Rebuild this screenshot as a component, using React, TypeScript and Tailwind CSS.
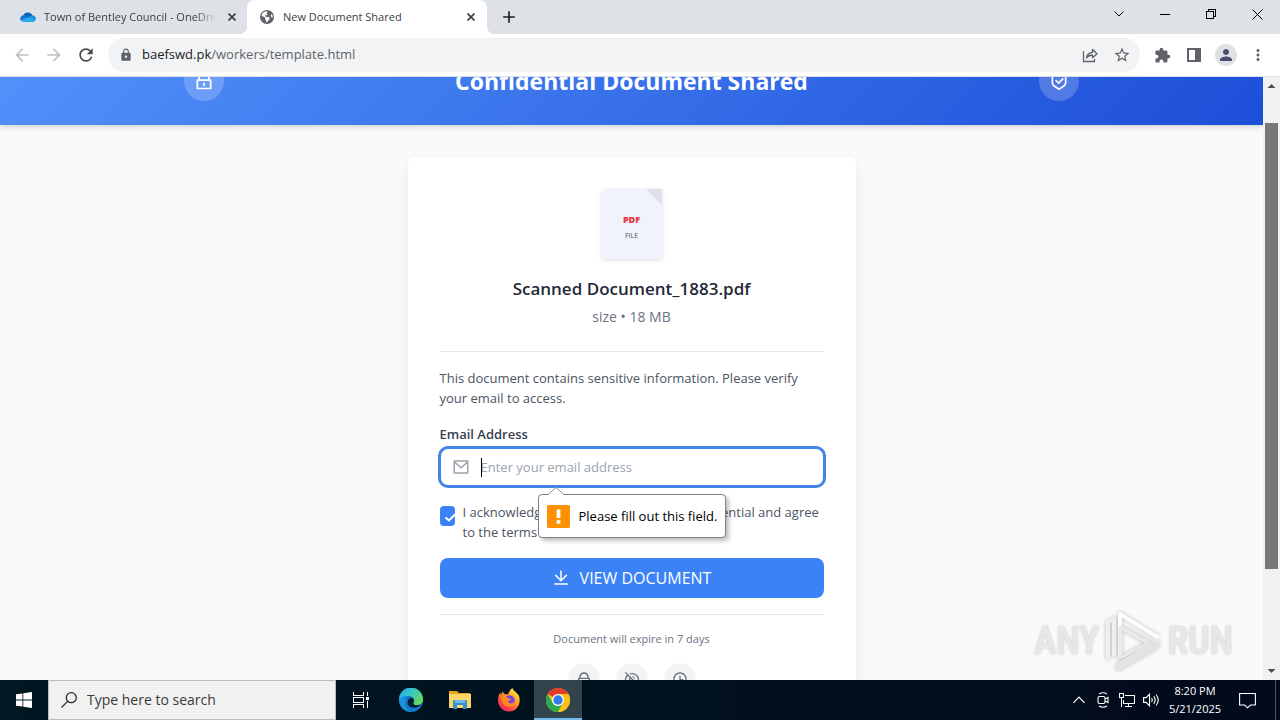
import React from "react";
import {
  RiLockLine,
  RiShieldCheckLine,
  RiMailLine,
  RiDownloadLine,
  RiEyeOffLine,
  RiTimeLine,
} from "react-icons/ri";
import {
  MdArrowBack,
  MdArrowForward,
  MdRefresh,
  MdLock,
  MdStarBorder,
  MdExtension,
  MdPerson,
  MdMoreVert,
  MdAdd,
} from "react-icons/md";
import { FaEarthAmericas } from "react-icons/fa6";

function OneDriveIcon() {
  return (
    <svg viewBox="0 0 16 10" className="h-[10px] w-4 shrink-0" aria-hidden="true">
      <path d="M3.2 3.6A5 5 0 0 1 12.4 3.4L7 6.6Z" fill="#0364b8" />
      <path d="M3.4 3.3A3.4 3.4 0 0 0 .8 8.6L9.5 5.2 6 3.4a4 4 0 0 0-2.6-.1Z" fill="#0f78d4" />
      <path d="M9 5.2 12 3.3a3.4 3.4 0 0 1 3.4 4.9L13 8Z" fill="#1490df" />
      <path d="M.8 8.5A3.3 3.3 0 0 0 3.4 10h9.4a3 3 0 0 0 2.6-1.6L9.3 5Z" fill="#28a8ea" />
    </svg>
  );
}

function TabCloseIcon() {
  return (
    <svg viewBox="0 0 8 8" className="size-2" fill="none" stroke="currentColor" strokeWidth="1.7">
      <path d="M.500 .500l7 7M7.500 .500l-7 7" />
    </svg>
  );
}

function TabStrip() {
  return (
    <div className="flex h-[34px] shrink-0 items-stretch bg-[#dee1e6] text-[#3c4043]">
      <div className="flex w-[247px] items-center pl-5 pr-[11px]">
        <OneDriveIcon />
        <span className="ml-2 w-[172px] overflow-hidden whitespace-nowrap text-[11px] [mask-image:linear-gradient(to_right,black_88%,transparent)]">
          Town of Bentley Council - OneDrive
        </span>
        <button type="button" aria-label="Close tab" className="ml-auto">
          <TabCloseIcon />
        </button>
      </div>
      <div className="relative flex w-60 items-center rounded-t-lg bg-white pl-3 pr-3">
        <span className="absolute bottom-0 -left-2 size-2 bg-[radial-gradient(circle_at_top_left,transparent_8px,white_8px)]" />
        <span className="absolute -right-2 bottom-0 size-2 bg-[radial-gradient(circle_at_top_right,transparent_8px,white_8px)]" />
        <span className="flex size-4 items-center justify-center">
          <FaEarthAmericas className="size-3.5 text-[#5f6368]" />
        </span>
        <span className="ml-2 text-[11px]">New Document Shared</span>
        <button type="button" aria-label="Close tab" className="ml-auto">
          <TabCloseIcon />
        </button>
      </div>
      <button type="button" aria-label="New tab" className="ml-3 text-[#202124]">
        <MdAdd className="size-5" />
      </button>
      <div className="ml-auto flex h-7 text-black">
        <button type="button" aria-label="Search tabs" className="flex w-[46px] items-center justify-center">
          <svg viewBox="0 0 10 6" className="h-1.5 w-2.5" fill="none" stroke="currentColor">
            <path d="M.5 .5 5 5 9.5 .5" />
          </svg>
        </button>
        <button type="button" aria-label="Minimize" className="flex w-[46px] items-center justify-center">
          <span className="h-px w-2.5 bg-black" />
        </button>
        <button type="button" aria-label="Restore" className="flex w-[46px] items-center justify-center">
          <svg viewBox="0 0 10 10" className="size-2.5" fill="none" stroke="currentColor" shapeRendering="crispEdges">
            <path d="M.5 2.5h7v7h-7zM2.5 2.5v-2h7v7h-2" />
          </svg>
        </button>
        <button type="button" aria-label="Close" className="flex w-[46px] items-center justify-center">
          <svg viewBox="0 0 11 11" className="size-[11px]" fill="none" stroke="currentColor">
            <path d="M.5 .5l10 10M10.5 .5l-10 10" />
          </svg>
        </button>
      </div>
    </div>
  );
}

function Toolbar() {
  return (
    <div className="flex h-[43px] shrink-0 items-center border-b border-[#dcdfe3] bg-white text-[#5f6368]">
      <div className="flex gap-3 pl-3">
        <button type="button" aria-label="Back" className="text-[#bdc1c6]">
          <MdArrowBack className="size-5" />
        </button>
        <button type="button" aria-label="Forward" className="text-[#bdc1c6]">
          <MdArrowForward className="size-5" />
        </button>
        <button type="button" aria-label="Reload" className="text-[#46494d]">
          <MdRefresh className="size-5" />
        </button>
      </div>
      <div className="ml-3 flex h-[34px] grow items-center rounded-full bg-[#f1f3f4] pl-[11px] pr-[9px]">
        <MdLock className="size-3.5" />
        <span className="ml-[9px] text-[13px]">
          <span className="text-[#202124]">baefswd.pk</span>/workers/template.html
        </span>
        <button type="button" aria-label="Share" className="ml-auto">
          <svg viewBox="0 0 16 16" className="size-4" fill="none" stroke="currentColor" strokeWidth="1.3">
            <path d="M1.5 4v10.5h11V12" />
            <path d="M4.5 11c.4-3.6 2.600-5.400 6-5.600V2.500L15 6.700l-4.500 4V8c-2.800 0-4.600.8-6 3Z" strokeLinejoin="round" />
          </svg>
        </button>
        <button type="button" aria-label="Bookmark" className="ml-[15px]">
          <MdStarBorder className="size-[18px]" />
        </button>
      </div>
      <div className="flex items-center gap-3 pl-3 pr-3">
        <button type="button" aria-label="Extensions" className="flex w-5 justify-center">
          <MdExtension className="size-[17px]" />
        </button>
        <button type="button" aria-label="Side panel" className="flex w-5 justify-center">
          <svg viewBox="0 0 14 14" className="size-3.5" aria-hidden="true">
            <path d="M0 0h14v14H0zM2 2v10h6V2z" fill="currentColor" fillRule="evenodd" />
          </svg>
        </button>
        <button type="button" aria-label="Profile" className="flex w-5 justify-center">
          <span className="flex size-[22px] shrink-0 items-center justify-center rounded-full bg-[#dee1e6]">
            <MdPerson className="size-[18px] text-[#4a4e6b]" />
          </span>
        </button>
        <button type="button" aria-label="Menu" className="flex w-5 justify-center">
          <MdMoreVert className="size-[18px]" />
        </button>
      </div>
    </div>
  );
}

function PageHeader() {
  return (
    <header className="-mt-10 bg-[linear-gradient(135deg,#5393fb,#1d4ed8)] py-6 text-white shadow-md">
      <div className="mx-auto flex max-w-4xl items-center justify-between">
        <span className="flex size-10 items-center justify-center rounded-full bg-white/20">
          <RiLockLine className="size-5" />
        </span>
        <h1 className="text-[23px] font-bold">Confidential Document Shared</h1>
        <span className="flex size-10 items-center justify-center rounded-full bg-white/20">
          <RiShieldCheckLine className="size-5" />
        </span>
      </div>
    </header>
  );
}

function PdfIcon() {
  return (
    <div className="flex h-[70px] w-[60px] flex-col items-center justify-center rounded-xs bg-[linear-gradient(225deg,#dde1e8_11px,#f0f3fb_12px)] pt-2 shadow-[0_1px_4px_rgba(0,0,0,0.14)]">
      <span className="text-[9px] leading-4 font-extrabold text-[#e5343b]">PDF</span>
      <span className="text-[7px] leading-4 text-[#4b5563]">FILE</span>
    </div>
  );
}

function ValidationBubble() {
  return (
    <div
      role="alert"
      className="absolute top-[46px] left-[98px] z-10 flex h-11 items-center gap-[9px] rounded-sm border border-[#808080] bg-white px-2 text-[13px] whitespace-nowrap text-black shadow-[3px_3px_4px_rgba(0,0,0,0.25)]"
    >
      <svg viewBox="0 0 18 9" className="absolute -top-2 left-2 h-[9px] w-[18px]" aria-hidden="true">
        <path d="M1 8 9 0.500 17 8V9H1Z" fill="#fff" />
        <path d="M1 7.500 9 0.500 17 7.500" fill="none" stroke="#909090" />
      </svg>
      <svg viewBox="0 0 23 23" className="size-[23px]" aria-hidden="true">
        <rect width="23" height="23" rx="1.500" fill="#ff9100" />
        <path d="M9.600 4.500h3.800V13H9.600zM9.600 15.300h3.800V18.800H9.600z" fill="#fff" />
      </svg>
      Please fill out this field.
    </div>
  );
}

function DocumentCard() {
  return (
    <section className="mx-auto w-full max-w-md rounded-lg bg-white p-8 shadow-[0_6px_14px_rgba(0,0,0,0.07)]">
      <div className="flex flex-col items-center">
        <PdfIcon />
        <h2 className="mt-4 text-[17px] leading-7 font-semibold text-[#1f2937]">Scanned Document_1883.pdf</h2>
        <p className="mt-1 text-sm text-[#6b7280]">size • 18 MB</p>
      </div>
      <form
        className="mt-6 border-t border-[#e5e7eb] pt-4 text-[13px] leading-5 text-[#4b5563]"
        onSubmit={(e) => e.preventDefault()}
      >
        <p>This document contains sensitive information. Please verify your email to access.</p>
        <label htmlFor="email" className="mt-4 block font-semibold text-[#374151]">
          Email Address
        </label>
        <div className="relative mt-1">
          <RiMailLine className="absolute top-[10px] left-[12px] size-[18px] text-[#9ca3af]" />
          <input
            id="email"
            type="email"
            placeholder="Enter your email address"
            className="block h-[38px] w-full rounded-lg border border-[#4480e6] bg-white pr-3 pl-10 ring-2 ring-[#4480e6] outline-none placeholder:text-[#9ca3af]"
          />
          <span className="absolute top-[10px] left-[41px] h-[19px] w-px bg-black" />
          <ValidationBubble />
        </div>
        <div className="relative mt-4 flex items-start gap-2">
          <input
            id="agree"
            type="checkbox"
            defaultChecked
            className="peer mt-1 h-5 w-[15px] shrink-0 appearance-none rounded-sm bg-[#3b82f6]"
          />
          <svg
            viewBox="0 0 15 20"
            className="pointer-events-none absolute top-1 left-0 hidden h-5 w-[15px] peer-checked:block"
            fill="none"
            stroke="#fff"
            strokeWidth="2"
            aria-hidden="true"
          >
            <path d="M5.500 11.500 9 14.500l6-6" />
          </svg>
          <label htmlFor="agree">
            I acknowledge that this document is confidential and agree to the terms of access.
          </label>
        </div>
        <button
          type="submit"
          className="mt-4 flex h-10 w-full items-center justify-center gap-2.5 rounded-lg bg-[#3b82f6] text-base font-medium text-white"
        >
          <RiDownloadLine className="size-[18px]" />
          VIEW DOCUMENT
        </button>
      </form>
      <footer className="mt-4 flex flex-col items-center border-t border-[#e5e7eb] pt-4 text-[#6b7280]">
        <p className="text-[11px] leading-4">Document will expire in 7 days</p>
        <div className="mt-4 flex gap-4">
          <span className="flex size-8 items-center justify-center rounded-full bg-[#f3f4f6]">
            <RiLockLine className="size-4" />
          </span>
          <span className="flex size-8 items-center justify-center rounded-full bg-[#f3f4f6]">
            <RiEyeOffLine className="size-4" />
          </span>
          <span className="flex size-8 items-center justify-center rounded-full bg-[#f3f4f6]">
            <RiTimeLine className="size-4" />
          </span>
        </div>
      </footer>
    </section>
  );
}

function Scrollbar() {
  return (
    <div className="flex w-[17px] shrink-0 flex-col items-center bg-[#f1f1f1]">
      <svg viewBox="0 0 17 17" className="size-[17px] shrink-0" aria-hidden="true">
        <path d="M4.500 11 8.500 7l4 4z" fill="#505050" />
      </svg>
      <div className="grow-[29]" />
      <div className="w-[13px] grow-[446] bg-[#787878]" />
      <div className="grow-[94]" />
      <svg viewBox="0 0 17 17" className="size-[17px] shrink-0" aria-hidden="true">
        <path d="M4.500 6 8.500 10l4-4z" fill="#505050" />
      </svg>
    </div>
  );
}

function Watermark() {
  return (
    <div className="absolute right-[30px] bottom-2 flex items-center gap-1 font-['Roboto_Condensed','Roboto',sans-serif] text-[38px] leading-none font-medium text-[#e6e7e9] [text-shadow:0_0_3px_rgba(0,0,0,0.2)]">
      <span>ANY</span>
      <svg viewBox="0 0 60 62" className="h-[62px] w-[60px]" fill="none" aria-hidden="true">
        <g strokeLinejoin="round" className="drop-shadow-[0_0_2px_rgba(0,0,0,0.25)]">
          <path d="M5 50V12l6-3V46" stroke="#eeeff0" strokeWidth="4" />
          <path d="M17 48V4L56 28" stroke="#fdfdfd" strokeWidth="4" />
          <path d="M17 17 49 34 15 55v4L57 34" stroke="#e2e3e5" strokeWidth="4" />
          <path d="M17 17v31L45 33Z" stroke="#e8e9ea" strokeWidth="3" />
        </g>
      </svg>
      <span>RUN</span>
    </div>
  );
}

function EdgeIcon() {
  return (
    <svg viewBox="0 0 24 24" className="size-6" aria-hidden="true">
      <defs>
        <linearGradient id="edgeTop" x1="0" y1="0" x2="1" y2="0.600">
          <stop offset="0" stopColor="#2aa7e8" />
          <stop offset="0.500" stopColor="#35c4c9" />
          <stop offset="1" stopColor="#64d95c" />
        </linearGradient>
      </defs>
      <circle cx="12" cy="12" r="12" fill="#1476cc" />
      <path d="M0 12A12 12 0 0 1 24 11c.300 4-3 6.200-6.200 6.200-3 0-4.300-1-3.300-2.400C16.500 11.500 13.500 8 9.500 8 5 8 1 9.500 0 12Z" fill="url(#edgeTop)" />
      <path d="M8.500 15c0-3 1.800-5 3.800-5.200 2.200 0 3.500 2.500 2.200 5-.600 1.400.500 2.400 3.300 2.400 1.600 0 3-.400 4-.900-1.600 2.700-4 3.400-6.300 3.400-4 0-7-2-7-4.700Z" fill="#03212f" />
      <path d="M8.500 8.100C5 11 4.500 20 12.500 24 5.500 24 0 19 0 12c1-2.500 4.500-4 8.500-3.900Z" fill="#1b9de2" opacity="0.700" />
    </svg>
  );
}

function FolderIcon() {
  return (
    <svg viewBox="0 0 22 20" className="h-5 w-[22px]" aria-hidden="true">
      <path d="M0 1h8l2 2h11v4H0z" fill="#e8a321" />
      <path d="M0 4h22v14H0z" fill="#fbd669" />
      <path d="M4 19v-8q0-1 1-1h12q1 0 1 1v8h-4v-4H8v4z" fill="#3a8fcd" />
      <path d="M6 10h10v3H6z" fill="#6db9e8" />
    </svg>
  );
}

function FirefoxIcon() {
  return (
    <svg viewBox="0 0 24 24" className="size-6" aria-hidden="true">
      <defs>
        <linearGradient id="foxBody" x1="0.850" y1="0" x2="0.150" y2="1">
          <stop offset="0" stopColor="#fff04a" />
          <stop offset="0.400" stopColor="#ffa023" />
          <stop offset="0.700" stopColor="#ff4a3d" />
          <stop offset="1" stopColor="#e3207b" />
        </linearGradient>
      </defs>
      <path d="M12 23.500A11 11 0 0 1 1 12.500C1 9 2 6 3.200 4.500L4 7l1.500-3.500L7.500 6 11 6.500C12 4 13 1.500 15.500 0c.500 3 5 4.500 6.500 8 2.500 8-2.500 15.500-10 15.500Z" fill="url(#foxBody)" />
      <circle cx="12.500" cy="12.500" r="5.200" fill="#7542e5" />
      <path d="M4.500 9c3-2 5-.500 6.500 1.200 1 .300 2.500.300 3 .800-.500 1.700-2.500 1.500-3 3 1 2 5 2 7.500-1-1 5-5 6.500-8.500 5.500-4-1-6-5-5.500-9.500Z" fill="#ff8a1f" />
    </svg>
  );
}

function ChromeIcon() {
  return (
    <svg viewBox="0 0 24 24" className="size-6" aria-hidden="true">
      <circle cx="12" cy="12" r="12" fill="#fbc116" />
      <path d="M12 12 1.600 6A12 12 0 0 1 22.400 6Z" fill="#e33b2e" />
      <path d="M1.600 6A12 12 0 0 0 12 24l5.200-9L12 12 6.800 15Z" fill="#2da94f" />
      <path d="M12 6h10.400A12 12 0 0 1 12 24l5.200-9Z" fill="#fbc116" />
      <circle cx="12" cy="12" r="6" fill="#fff" />
      <circle cx="12" cy="12" r="4.700" fill="#2f7de9" />
    </svg>
  );
}

function Taskbar() {
  return (
    <nav className="flex h-10 shrink-0 items-stretch bg-linear-to-r from-[#001822] to-[#020a1b] text-white">
      <button type="button" aria-label="Start" className="flex w-12 items-center justify-center">
        <svg viewBox="0 0 16 16" className="size-4" fill="#fff">
          <path d="M0 2.300 6.500 1.400V7.600H0zM7.300 1.300 16 0v7.600H7.300zM0 8.400h6.500v6.200L0 13.700zM7.300 8.400H16V16l-8.700-1.200z" />
        </svg>
      </button>
      <label className="flex w-72 items-center border border-[#bcbcbc] bg-[#f1f1f1] pl-3 text-[#2b2b2b]">
        <svg viewBox="0 0 16 16" className="size-4 shrink-0" fill="none" stroke="currentColor" strokeWidth="1.300">
          <circle cx="10.300" cy="5.700" r="5" />
          <path d="M6.600 9.400.500 15.500" />
        </svg>
        <input
          type="text"
          aria-label="Search"
          placeholder="Type here to search"
          className="ml-2.5 min-w-0 grow bg-transparent text-sm outline-none placeholder:text-[#3a3a3a]"
        />
      </label>
      <div className="flex gap-px">
        <button type="button" aria-label="Task view" className="flex w-[50px] items-center justify-center">
          <svg viewBox="0 0 17 16" className="h-4 w-[17px]" fill="none" stroke="#fff" shapeRendering="crispEdges">
            <path d="M.500 0v3.500h10V0M.500 16v-3.500h10V16M.500 5.500h10v5H.500zM14.500 0v4M14.500 9v7" />
            <path d="M13 5h3v3h-3z" fill="#fff" stroke="none" />
          </svg>
        </button>
        <button type="button" aria-label="Edge" className="flex w-12 items-center justify-center">
          <EdgeIcon />
        </button>
        <button type="button" aria-label="File Explorer" className="flex w-12 items-center justify-center">
          <FolderIcon />
        </button>
        <button type="button" aria-label="Firefox" className="flex w-12 items-center justify-center">
          <FirefoxIcon />
        </button>
        <button
          type="button"
          aria-label="Chrome"
          className="flex w-12 items-center justify-center border-b-2 border-[#76b9ed] bg-[#33434c] pt-0.5"
        >
          <ChromeIcon />
        </button>
      </div>
      <div className="ml-auto flex items-center">
        <button type="button" aria-label="Hidden icons" className="flex w-6 justify-center">
          <svg viewBox="0 0 12 8" className="h-2 w-3" fill="none" stroke="#fff" strokeWidth="1.200">
            <path d="M.500 6.800 6 1.200l5.500 5.600" />
          </svg>
        </button>
        <span className="flex w-6 justify-center">
          <svg viewBox="0 0 12 16" className="h-4 w-3" fill="none" stroke="#fff" strokeWidth="1.100">
            <rect x="1" y="4.500" width="7" height="7" rx="1.500" />
            <path d="M8 7l3-1.500v5L8 9M2 2Q6-.500 10 2M2 14q4 2.500 8 0" />
          </svg>
        </span>
        <span className="flex w-6 justify-center">
          <svg viewBox="0 0 16 14" className="h-3.5 w-4" fill="none" stroke="#fff" shapeRendering="crispEdges">
            <path d="M5.500 2.500h10v8h-11v-4M9.500 10.500v3M6 13.500h7M.500.500h4v4h-4zM2.500 4.500v9" />
          </svg>
        </span>
        <span className="flex w-6 justify-center">
          <svg viewBox="0 0 17 14" className="h-3.5 w-[17px]" fill="none" stroke="#fff" strokeWidth="1.100">
            <path d="M.600 4.600h2.500L6.500 1.200v11.600L3.100 9.400H.600zM8.500 5q1.500 2 0 4M10.700 3.300q3 3.700 0 7.400M13 1.500q4.500 5.500 0 11" />
          </svg>
        </span>
        <div className="w-16 text-center text-[11px] leading-[18px]">
          <div>8:20 PM</div>
          <div>5/21/2025</div>
        </div>
        <button type="button" aria-label="Notifications" className="flex w-10 justify-center">
          <svg viewBox="0 0 17 17" className="size-[17px]" fill="none" stroke="#fff" strokeWidth="1.100">
            <path d="M.600 1.500h15.800v11.500h-5L8.500 15.800 5.600 13H.600z" />
          </svg>
        </button>
        <span className="ml-2 h-10 w-[5px] border-l border-[#4b5563]" />
      </div>
    </nav>
  );
}

export default function App() {
  return (
    <div className="flex h-screen flex-col overflow-hidden font-['Open_Sans','Noto_Sans',sans-serif]">
      <TabStrip />
      <Toolbar />
      <div className="flex min-h-0 grow">
        <main className="relative min-w-0 grow overflow-hidden bg-[#f8fafc]">
          <PageHeader />
          <div className="pt-8">
            <DocumentCard />
          </div>
          <Watermark />
        </main>
        <Scrollbar />
      </div>
      <Taskbar />
    </div>
  );
}
